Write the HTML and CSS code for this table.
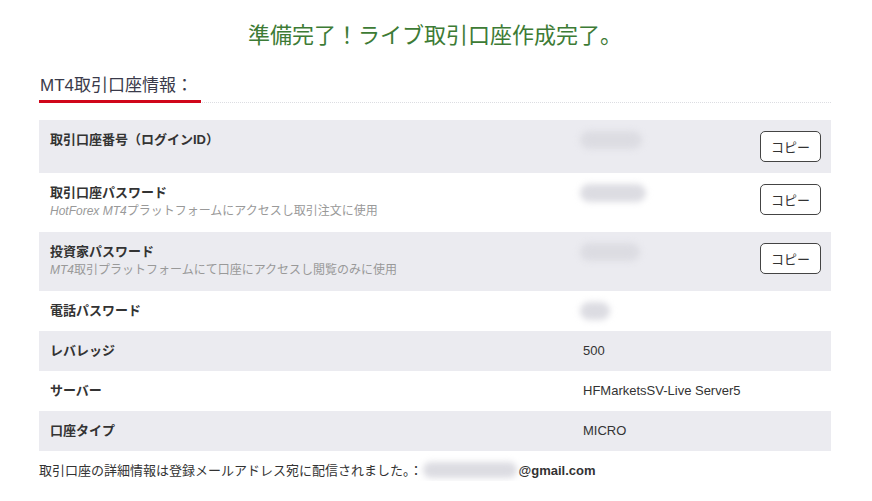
FILE: index.html
```html
<!DOCTYPE html>
<html lang="ja">
<head>
    <meta charset="UTF-8">
    <meta name="viewport" content="width=device-width, initial-scale=1.0">
    <title>口座作成完了</title>
    <link rel="stylesheet" href="styles.css">
</head>
<body>
    <div class="page">
        <h1 class="title">準備完了！ライブ取引口座作成完了。</h1>

        <div class="section-head">
            <h2>MT4取引口座情報：</h2>
        </div>

        <table class="account">
            <tr class="shade">
                <td class="label">取引口座番号（ログインID）</td>
                <td class="value">
                    <span class="blur" style="width:62px"></span>
                    <button class="copy">コピー</button>
                </td>
            </tr>
            <tr>
                <td class="label">
                    取引口座パスワード
                    <div class="note"><i>HotForex MT4</i>プラットフォームにアクセスし取引注文に使用</div>
                </td>
                <td class="value">
                    <span class="blur" style="width:66px"></span>
                    <button class="copy">コピー</button>
                </td>
            </tr>
            <tr class="shade">
                <td class="label">
                    投資家パスワード
                    <div class="note"><i>MT4</i>取引プラットフォームにて口座にアクセスし閲覧のみに使用</div>
                </td>
                <td class="value">
                    <span class="blur" style="width:60px"></span>
                    <button class="copy">コピー</button>
                </td>
            </tr>
            <tr>
                <td class="label">電話パスワード</td>
                <td class="value"><span class="blur" style="width:30px"></span></td>
            </tr>
            <tr class="shade">
                <td class="label">レバレッジ</td>
                <td class="value">500</td>
            </tr>
            <tr>
                <td class="label">サーバー</td>
                <td class="value">HFMarketsSV-Live Server5</td>
            </tr>
            <tr class="shade">
                <td class="label">口座タイプ</td>
                <td class="value">MICRO</td>
            </tr>
        </table>

        <p class="footer">取引口座の詳細情報は登録メールアドレス宛に配信されました。：<span class="blur mail"></span><b>@gmail.com</b></p>
    </div>
</body>
</html>
```

FILE: styles.css
```css
body {
    margin: 0;
    background: #fff;
    color: #333;
    font-family: "Liberation Sans", Arial, "Noto Sans CJK JP", sans-serif;
}

.page {
    width: 792px;
    margin: 0 auto;
    position: relative;
    left: -1px;
}

.title {
    margin: 0;
    padding-top: 22px;
    height: 48px;
    text-align: center;
    font-size: 22px;
    font-weight: normal;
    color: #3d7b35;
    line-height: 28px;
}

.section-head {
    margin-top: 4px;
    border-bottom: 1px dotted #dcdde2;
}

.section-head h2 {
    display: inline-block;
    margin: 0 0 -1px;
    padding: 0 8px 2px 1px;
    font-size: 17px;
    font-weight: normal;
    line-height: 24px;
    color: #3a3a4a;
    border-bottom: 3px solid #d0061a;
}

.account {
    width: 100%;
    margin-top: 17px;
    border-collapse: collapse;
    font-size: 13px;
}

.account td {
    padding: 11px 10px 11px 11px;
    vertical-align: top;
    line-height: 18px;
}

.account tr.shade {
    background: #ebebf0;
}

.label {
    width: 512px;
    font-weight: bold;
    color: #333;
}

.note {
    font-weight: normal;
    font-size: 12px;
    line-height: 19px;
    color: #999;
}

.value {
    color: #333;
}

.value .blur {
    float: left;
    height: 18px;
    margin: 0 0 0 -3px;
}

.blur {
    display: inline-block;
    height: 20px;
    border-radius: 9px;
    background: #dcdce2;
    filter: blur(3px);
}

.copy {
    float: right;
    width: 61px;
    height: 31px;
    padding: 0;
    font-size: 13px;
    font-family: "Noto Sans CJK JP", sans-serif;
    color: #333;
    background: #fff;
    border: 1px solid #444;
    border-radius: 5px;
    cursor: pointer;
}

.footer {
    margin: 10px 0 0;
    font-size: 13px;
    line-height: 20px;
    color: #333;
}

.footer .mail {
    width: 94px;
    height: 16px;
    vertical-align: -3px;
    margin: 0 2px 0 0;
}

.footer b {
    font-weight: bold;
}
```
